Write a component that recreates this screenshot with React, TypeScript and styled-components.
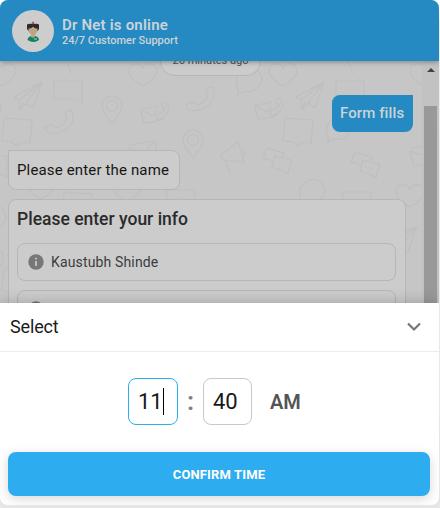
import React from "react";
import styled, { createGlobalStyle } from "styled-components";

const Global = createGlobalStyle`
  * { box-sizing: border-box; }
  body { margin: 0; background: #fff; font-family: Roboto, "Open Sans", sans-serif; }
`;

const Page = styled.div`
  height: 508px;
  overflow: hidden;
  background: linear-gradient(#fff 0 8px, #ececec 24px, #e6e6e6);
`;

const Widget = styled.main`
  width: 439px;
  height: 505px;
  display: flex;
  flex-direction: column;
  overflow: hidden;
  border-radius: 8px;
  background: #fff;
`;

const Header = styled.header`
  position: relative;
  z-index: 2;
  flex: 0 0 61px;
  display: flex;
  align-items: center;
  gap: 8px;
  padding-left: 12px;
  background: #258ac1;
  color: #cbd3d8;
  box-shadow: 0 1px 5px rgba(0, 0, 0, 0.35);
`;

const Avatar = styled.div`
  width: 42px;
  height: 42px;
  border-radius: 50%;
  background: #cdcdcd;
  svg { display: block; }
`;

const Titles = styled.div`
  padding-top: 1px;
`;

const AgentName = styled.h1`
  margin: 0;
  font-size: 15px;
  line-height: 18px;
  font-weight: 600;
  letter-spacing: 0.2px;
`;

const Tagline = styled.p`
  margin: 0;
  font-size: 11px;
  line-height: 13px;
  font-weight: 500;
`;

const Body = styled.div`
  flex: 0 0 242px;
  display: flex;
  overflow: hidden;
`;

const Chat = styled.section`
  position: relative;
  flex: 1;
  display: flex;
  flex-direction: column;
  align-items: flex-start;
  overflow: hidden;
  padding: 0 9px 0 8px;
  background: #c6c6c6;
`;

const Doodles = styled.svg`
  position: absolute;
  left: 0;
  top: 0;
`;

const TimePill = styled.div`
  position: relative;
  align-self: center;
  width: 101px;
  height: 31px;
  flex: none;
  margin: -16px 0 19px;
  border: 1px solid #b6b6b6;
  border-radius: 15px;
  background: #cccccc;
  color: #555;
  font-size: 11px;
  line-height: 29px;
  text-align: center;
`;

const Bubble = styled.div<{ $own?: boolean }>`
  position: relative;
  flex: none;
  align-self: ${(p) => (p.$own ? "flex-end" : "flex-start")};
  height: ${(p) => (p.$own ? 37 : 40)}px;
  width: ${(p) => (p.$own ? 81 : 172)}px;
  line-height: ${(p) => (p.$own ? 37 : 38)}px;
  padding-left: 8px;
  margin-bottom: ${(p) => (p.$own ? 18 : 9)}px;
  border: ${(p) => (p.$own ? "0" : "1px solid #b6b6b6")};
  border-radius: ${(p) => (p.$own ? "8px 0 8px 8px" : "0 8px 8px 8px")};
  background: ${(p) => (p.$own ? "#258ac1" : "#cccccc")};
  color: ${(p) => (p.$own ? "#cbd3d8" : "#161616")};
  font-size: 15px;
  font-weight: ${(p) => (p.$own ? 500 : 400)};
  letter-spacing: ${(p) => (p.$own ? 0.1 : 0.15)}px;
  white-space: nowrap;
`;

const Card = styled.div`
  position: relative;
  flex: none;
  width: 398px;
  height: 150px;
  display: flex;
  flex-direction: column;
  gap: 9px;
  padding: 8px;
  border: 1px solid #b6b6b6;
  border-radius: 8px;
  background: #cccccc;
`;

const CardTitle = styled.h2`
  margin: 0 0 2px;
  height: 24px;
  color: #2b2b2b;
  font-size: 17.5px;
  line-height: 22px;
  font-weight: 500;
`;

const Field = styled.div`
  flex: 0 0 38px;
  width: 379px;
  display: flex;
  align-items: center;
  gap: 6px;
  padding-left: 9px;
  border: 1px solid #b6b6b6;
  border-radius: 8px;
  color: #3c3c3c;
  font-size: 14px;
  letter-spacing: 0.15px;
`;

const ScrollTrack = styled.div`
  flex: 0 0 17px;
  display: flex;
  flex-direction: column;
  align-items: center;
  padding: 7px 0 0;
  background: #c2c2c2;
`;

const ScrollThumb = styled.div`
  width: 13px;
  flex: 1;
  margin-top: 34px;
  background: #999;
`;

const Sheet = styled.section`
  position: relative;
  z-index: 3;
  flex: 1;
  background: #fff;
  box-shadow: 0 0 14px rgba(0, 0, 0, 0.22);
`;

const SheetHeader = styled.div`
  height: 49px;
  display: flex;
  align-items: center;
  justify-content: space-between;
  padding: 0 15px 2px 10px;
  border-bottom: 1px solid #ececec;
  color: #1b1b1b;
  font-size: 18px;
  letter-spacing: -0.15px;
`;

const TimeRow = styled.div`
  height: 100px;
  display: flex;
  align-items: center;
  padding: 0 0 2px 128px;
`;

const TimeBox = styled.div<{ $active?: boolean }>`
  width: ${(p) => (p.$active ? 50 : 49)}px;
  height: 47px;
  display: flex;
  align-items: center;
  padding-left: 9px;
  border: 1px solid ${(p) => (p.$active ? "#2eacf0" : "#c8c8c8")};
  border-radius: 8px;
  color: #181818;
  font-size: 22px;
`;

const Caret = styled.span`
  width: 1px;
  height: 27px;
  background: #000;
`;

const Colon = styled.span`
  width: 25px;
  color: #808080;
  font-size: 26px;
  line-height: 28px;
  font-weight: 600;
  text-align: center;
`;

const Meridiem = styled.span`
  margin: 2px 0 0 18px;
  color: #555;
  font-size: 20px;
  font-weight: 600;
  letter-spacing: -0.2px;
`;

const Confirm = styled.button`
  display: block;
  width: 422px;
  height: 44px;
  margin: 0 0 0 8px;
  padding: 0;
  border: 0;
  border-radius: 8px;
  background: #2eacf0;
  color: #fff;
  box-shadow: 0 3px 12px rgba(0, 0, 0, 0.16);
  font: 700 13px/45px Roboto, sans-serif;
  letter-spacing: 0.15px;
`;

type Kind = "heart" | "plane" | "chat" | "pin" | "mailPhone" | "phone" | "square" | "pair" | "horn" | "round" | "mail" | "line";

const shapes: Record<Kind, string> = {
  heart: "M14 23C8 20 0 14 0 7.500C0 0 11-2 14 5C17-2 28 0 28 7.500C28 14 20 20 14 23Z",
  plane: "M0 15L28 0L19 26L12 21L6 28L5 18Z M5 18L28 0L12 21 M9 20L6 28",
  chat: "M2 0H26Q28 0 28 2V21L22 18H2Q0 18 0 16V2Q0 0 2 0Z M10 8h.5M14 8h.5M19 8h.5",
  pin: "M10 28C5 21 0 16 0 10A10 10 0 0 1 20 10C20 16 15 21 10 28Z M4.500 10a5.500 5.500 0 1 0 11 0a5.500 5.500 0 1 0-11 0",
  mailPhone: "M17 4L1 7Q0 8 0 9L3 21Q15 20 22 17L21 15M1 8L12 14L16 9M21 1L25 0Q30 8 25 13Q21 18 16 17L15 14L19 11Q22 11 24 7L21 5Z",
  phone: "M21 2Q25-1 27 1Q31 14 20 20Q11 26 2 22L0 18Q5 14 8 15L11 18Q20 15 22 8L20 6Z",
  square: "M3 0L28 2Q30 2 30 4L28 25L18 25L14 28L10 24L1 23Q0 23 0 21L2 1Z",
  pair: "M3 12L0 10L4 0L21 5L19 9M3 10L9 13M11 8L28 12Q29 13 28 15L26 22L25 26L21 23L9 19L12 8M15 15h.5M18 16h.5M21 17h.5",
  horn: "M0 14L18 0L24 20L3 18Z M5 19L10 30M21 7Q27 8 23 15",
  round: "M3 23Q-3 10 5 3Q14-4 23 3Q30 13 20 20Q14 24 9 22L1 26Z",
  mail: "M2 4L27 0L30 18L4 22L0 7L15 12L27 0",
  line: "M0 0L5 12",
};

const doodles: [Kind, number, number][] = [
  ["heart", -12, 2], ["line", 66, 0], ["heart", 129, 2], ["round", 236, 8], ["heart", 269, 2], ["line", 348, 0], ["heart", 410, 2],
  ["plane", 14, 21], ["chat", 54, 20], ["pin", 102, 35], ["mailPhone", 141, 41], ["phone", 186, 26], ["mailPhone", 255, 37], ["plane", 296, 21], ["chat", 336, 20],
  ["square", 2, 57], ["phone", 45, 49], ["pin", 183, 69], ["mail", 128, 80], ["square", 283, 57], ["round", 326, 56],
  ["horn", 220, 81], ["pair", 263, 87], ["pair", 351, 91], ["mail", 410, 83], ["chat", -21, 95], ["round", -25, 36],
  ["heart", 27, 115], ["square", 62, 131], ["heart", 113, 118], ["chat", 167, 129], ["round", 299, 119], ["chat", 343, 131], ["heart", 396, 123],
  ["plane", 389, 165], ["round", -20, 145], ["phone", -25, 190], ["square", 2, 207],
];

function Nurse() {
  return (
    <svg width="42" height="42" viewBox="0 0 42 42">
      <path d="M15.500 30q0-3 3.500-4h4.500q3.500 1 3.500 4-5.500 4-11.500 0z" fill="#138263" />
      <path d="M15 14.500q6-2.500 12 0v4.500l-1.500 2h-9l-1.500-2z" fill="#292c2d" />
      <path d="M16.500 18.500q2 .3 4.500-1.800 2.500 2.100 4.500 1.800v3l-2.500 3v2.500q-2 1.500-4 0v-2.500l-2.500-3z" fill="#bda583" />
      <path d="M17.500 14l1-2h5l1 2q-3.500-1-7 0z" fill="#c4c6c8" />
      <path d="M20.200 11.800h1.600v2.400h-1.600z" fill="#c63c3c" />
      <path d="M22 28.500h3v1h-3z" fill="#a9c9bd" />
    </svg>
  );
}

function Info() {
  return (
    <svg width="18" height="18" viewBox="0 0 18 18">
      <circle cx="9" cy="9" r="7.7" fill="#777" />
      <path d="M8.200 4.800h1.700v1.700H8.200zM8.200 8h1.700v5H8.200z" fill="#ccc" />
    </svg>
  );
}

export default function App() {
  return (
    <Page>
      <Global />
      <Widget>
        <Header>
          <Avatar><Nurse /></Avatar>
          <Titles>
            <AgentName>Dr Net is online</AgentName>
            <Tagline>24/7 Customer Support</Tagline>
          </Titles>
        </Header>
        <Body>
          <Chat>
            <Doodles width="422" height="242" fill="none" stroke="#bfbfbf" strokeWidth="1.2" strokeLinecap="round" strokeLinejoin="round">
              {doodles.map(([kind, x, y], i) => (
                <path key={i} d={shapes[kind]} transform={`translate(${x} ${y})`} />
              ))}
            </Doodles>
            <TimePill>26 minutes ago</TimePill>
            <Bubble $own>Form fills</Bubble>
            <Bubble>Please enter the name</Bubble>
            <Card>
              <CardTitle>Please enter your info</CardTitle>
              <Field><Info />Kaustubh Shinde</Field>
              <Field><Info /></Field>
            </Card>
          </Chat>
          <ScrollTrack>
            <svg width="8" height="4" viewBox="0 0 8 4"><path d="M4 0L8 4H0Z" fill="#404040" /></svg>
            <ScrollThumb />
          </ScrollTrack>
        </Body>
        <Sheet>
          <SheetHeader>
            Select
            <svg width="20" height="20" viewBox="0 0 20 20" fill="none" stroke="#777" strokeWidth="2.2"><path d="M4 7.500l6 6 6-6" /></svg>
          </SheetHeader>
          <TimeRow>
            <TimeBox $active>11<Caret /></TimeBox>
            <Colon>:</Colon>
            <TimeBox>40</TimeBox>
            <Meridiem>AM</Meridiem>
          </TimeRow>
          <Confirm>CONFIRM TIME</Confirm>
        </Sheet>
      </Widget>
    </Page>
  );
}
